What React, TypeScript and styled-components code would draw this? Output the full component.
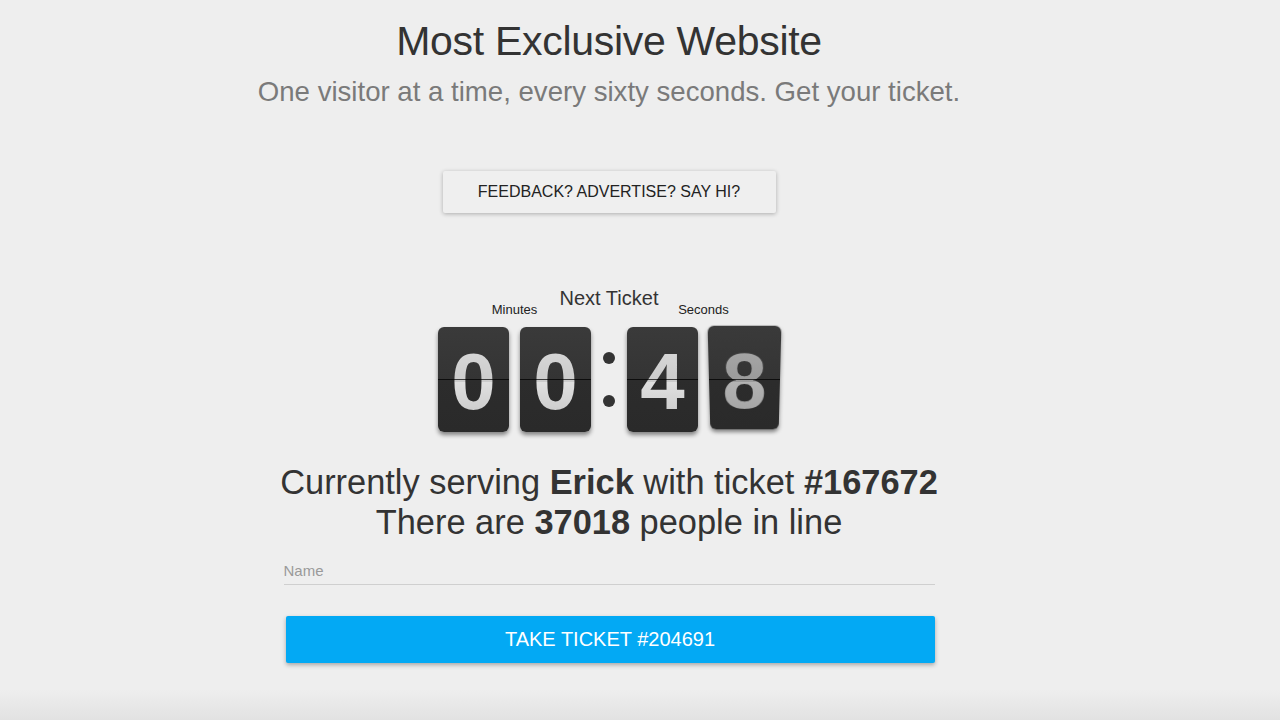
import styled, { createGlobalStyle } from "styled-components";

const GlobalStyle = createGlobalStyle`
  html, body {
    margin: 0;
    padding: 0;
  }
  body {
    min-height: 720px;
    background: linear-gradient(to bottom, #eeeeee 0, #eeeeee 690px, #e2e2e2 720px);
    font-family: "Liberation Sans", Arial, sans-serif;
    color: #333;
  }
`;

const Page = styled.div`
  width: 1218px;
  display: flex;
  flex-direction: column;
  align-items: center;
  padding-top: 16px;
`;

const Title = styled.h1`
  margin: 0;
  font-size: 41px;
  font-weight: 300;
  line-height: 50px;
  color: #333;
  letter-spacing: -0.3px;
`;

const Subtitle = styled.h2`
  margin: 8px 0 0;
  font-size: 27.6px;
  font-weight: 300;
  line-height: 36px;
  color: #7a7a7a;
`;

const FeedbackButton = styled.button`
  margin-top: 61px;
  width: 333px;
  height: 42px;
  border: none;
  border-radius: 2px;
  background: #efefef;
  box-shadow: 0 1px 4px rgba(0, 0, 0, 0.28);
  font-family: "Liberation Sans", Arial, sans-serif;
  font-size: 16px;
  color: #222;
  cursor: pointer;
`;

const Clock = styled.div`
  margin-top: 76px;
  display: flex;
  flex-direction: column;
  align-items: center;
`;

const LabelRow = styled.div`
  display: flex;
  align-items: flex-end;
  height: 32px;
`;

const SmallLabel = styled.span`
  width: 152px;
  font-size: 13px;
  text-align: center;
  color: #222;
  padding-bottom: 4px;
`;

const ClockTitle = styled.span`
  width: 37px;
  display: flex;
  justify-content: center;
  align-self: flex-start;
  white-space: nowrap;
  font-size: 20px;
  color: #333;
  margin-top: -2px;
`;

const Digits = styled.div`
  display: flex;
  align-items: center;
  margin-top: 6px;
`;

const Card = styled.div<{ $flipping?: boolean }>`
  position: relative;
  width: 71px;
  height: 105px;
  border-radius: 6px;
  background: linear-gradient(to bottom, #3a3a3a 0, #343434 50%, #2c2c2c 50%, #2a2a2a 100%);
  box-shadow: 0 3px 4px rgba(0, 0, 0, 0.45);
  display: flex;
  align-items: center;
  justify-content: center;
  overflow: hidden;
  transform: ${(p) => (p.$flipping ? "perspective(240px) rotateX(-10deg)" : "none")};
  transform-origin: center center;

  &::after {
    content: "";
    position: absolute;
    left: 0;
    right: 0;
    top: 52px;
    height: 1px;
    background: rgba(0, 0, 0, 0.7);
  }
`;

const Digit = styled.span<{ $dim?: boolean }>`
  font-family: "Liberation Sans", Arial, sans-serif;
  font-weight: 700;
  font-size: 80px;
  line-height: 1;
  margin-top: 4px;
  background: ${(p) =>
    p.$dim
      ? "linear-gradient(to bottom, #a9a9a9, #9a9a9a 50%, #b3b3b3 50%, #a0a0a0)"
      : "linear-gradient(to bottom, #dadada, #cbcbcb 50%, #e0e0e0 50%, #c6c6c6)"};
  -webkit-background-clip: text;
  background-clip: text;
  color: transparent;
`;

const CardGap = styled.div<{ $w: number }>`
  width: ${(p) => p.$w}px;
`;

const Colon = styled.div`
  width: 36px;
  height: 105px;
  display: flex;
  flex-direction: column;
  align-items: center;
  justify-content: center;
  gap: 31px;

  &::before,
  &::after {
    content: "";
    width: 12px;
    height: 12px;
    border-radius: 50%;
    background: #333;
  }
`;

const Status = styled.div`
  margin-top: 30px;
  text-align: center;
  font-size: 34.4px;
  line-height: 40px;
  color: #333;
  font-weight: 300;

  b {
    font-weight: 700;
  }
`;

const Form = styled.div`
  margin-top: 20px;
  width: 651px;
  display: flex;
  flex-direction: column;
  align-items: stretch;
`;

const NameInput = styled.input`
  border: none;
  border-bottom: 1px solid #cfcfcf;
  background: transparent;
  outline: none;
  padding: 0 0 5px 0;
  font-family: "Liberation Sans", Arial, sans-serif;
  font-size: 15px;
  color: #333;

  &::placeholder {
    color: #9a9a9a;
  }
`;

const TakeButton = styled.button`
  margin-top: 31px;
  margin-left: 2px;
  height: 47px;
  border: none;
  border-radius: 2px;
  background: #03a9f4;
  color: #fff;
  font-family: "Liberation Sans", Arial, sans-serif;
  font-size: 20px;
  box-shadow: 0 2px 4px rgba(0, 0, 0, 0.3);
  cursor: pointer;
`;

export default function App() {
  return (
    <>
      <GlobalStyle />
      <Page>
        <Title>Most Exclusive Website</Title>
        <Subtitle>One visitor at a time, every sixty seconds. Get your ticket.</Subtitle>

        <FeedbackButton>FEEDBACK? ADVERTISE? SAY HI?</FeedbackButton>

        <Clock>
          <LabelRow>
            <SmallLabel>Minutes</SmallLabel>
            <ClockTitle>Next Ticket</ClockTitle>
            <SmallLabel>Seconds</SmallLabel>
          </LabelRow>
          <Digits>
            <Card>
              <Digit>0</Digit>
            </Card>
            <CardGap $w={11} />
            <Card>
              <Digit>0</Digit>
            </Card>
            <Colon />
            <Card>
              <Digit>4</Digit>
            </Card>
            <CardGap $w={11} />
            <Card $flipping>
              <Digit $dim>8</Digit>
            </Card>
          </Digits>
        </Clock>

        <Status>
          Currently serving <b>Erick</b> with ticket <b>#167672</b>
          <br />
          There are <b>37018</b> people in line
        </Status>

        <Form>
          <NameInput placeholder="Name" />
          <TakeButton>TAKE TICKET #204691</TakeButton>
        </Form>
      </Page>
    </>
  );
}
